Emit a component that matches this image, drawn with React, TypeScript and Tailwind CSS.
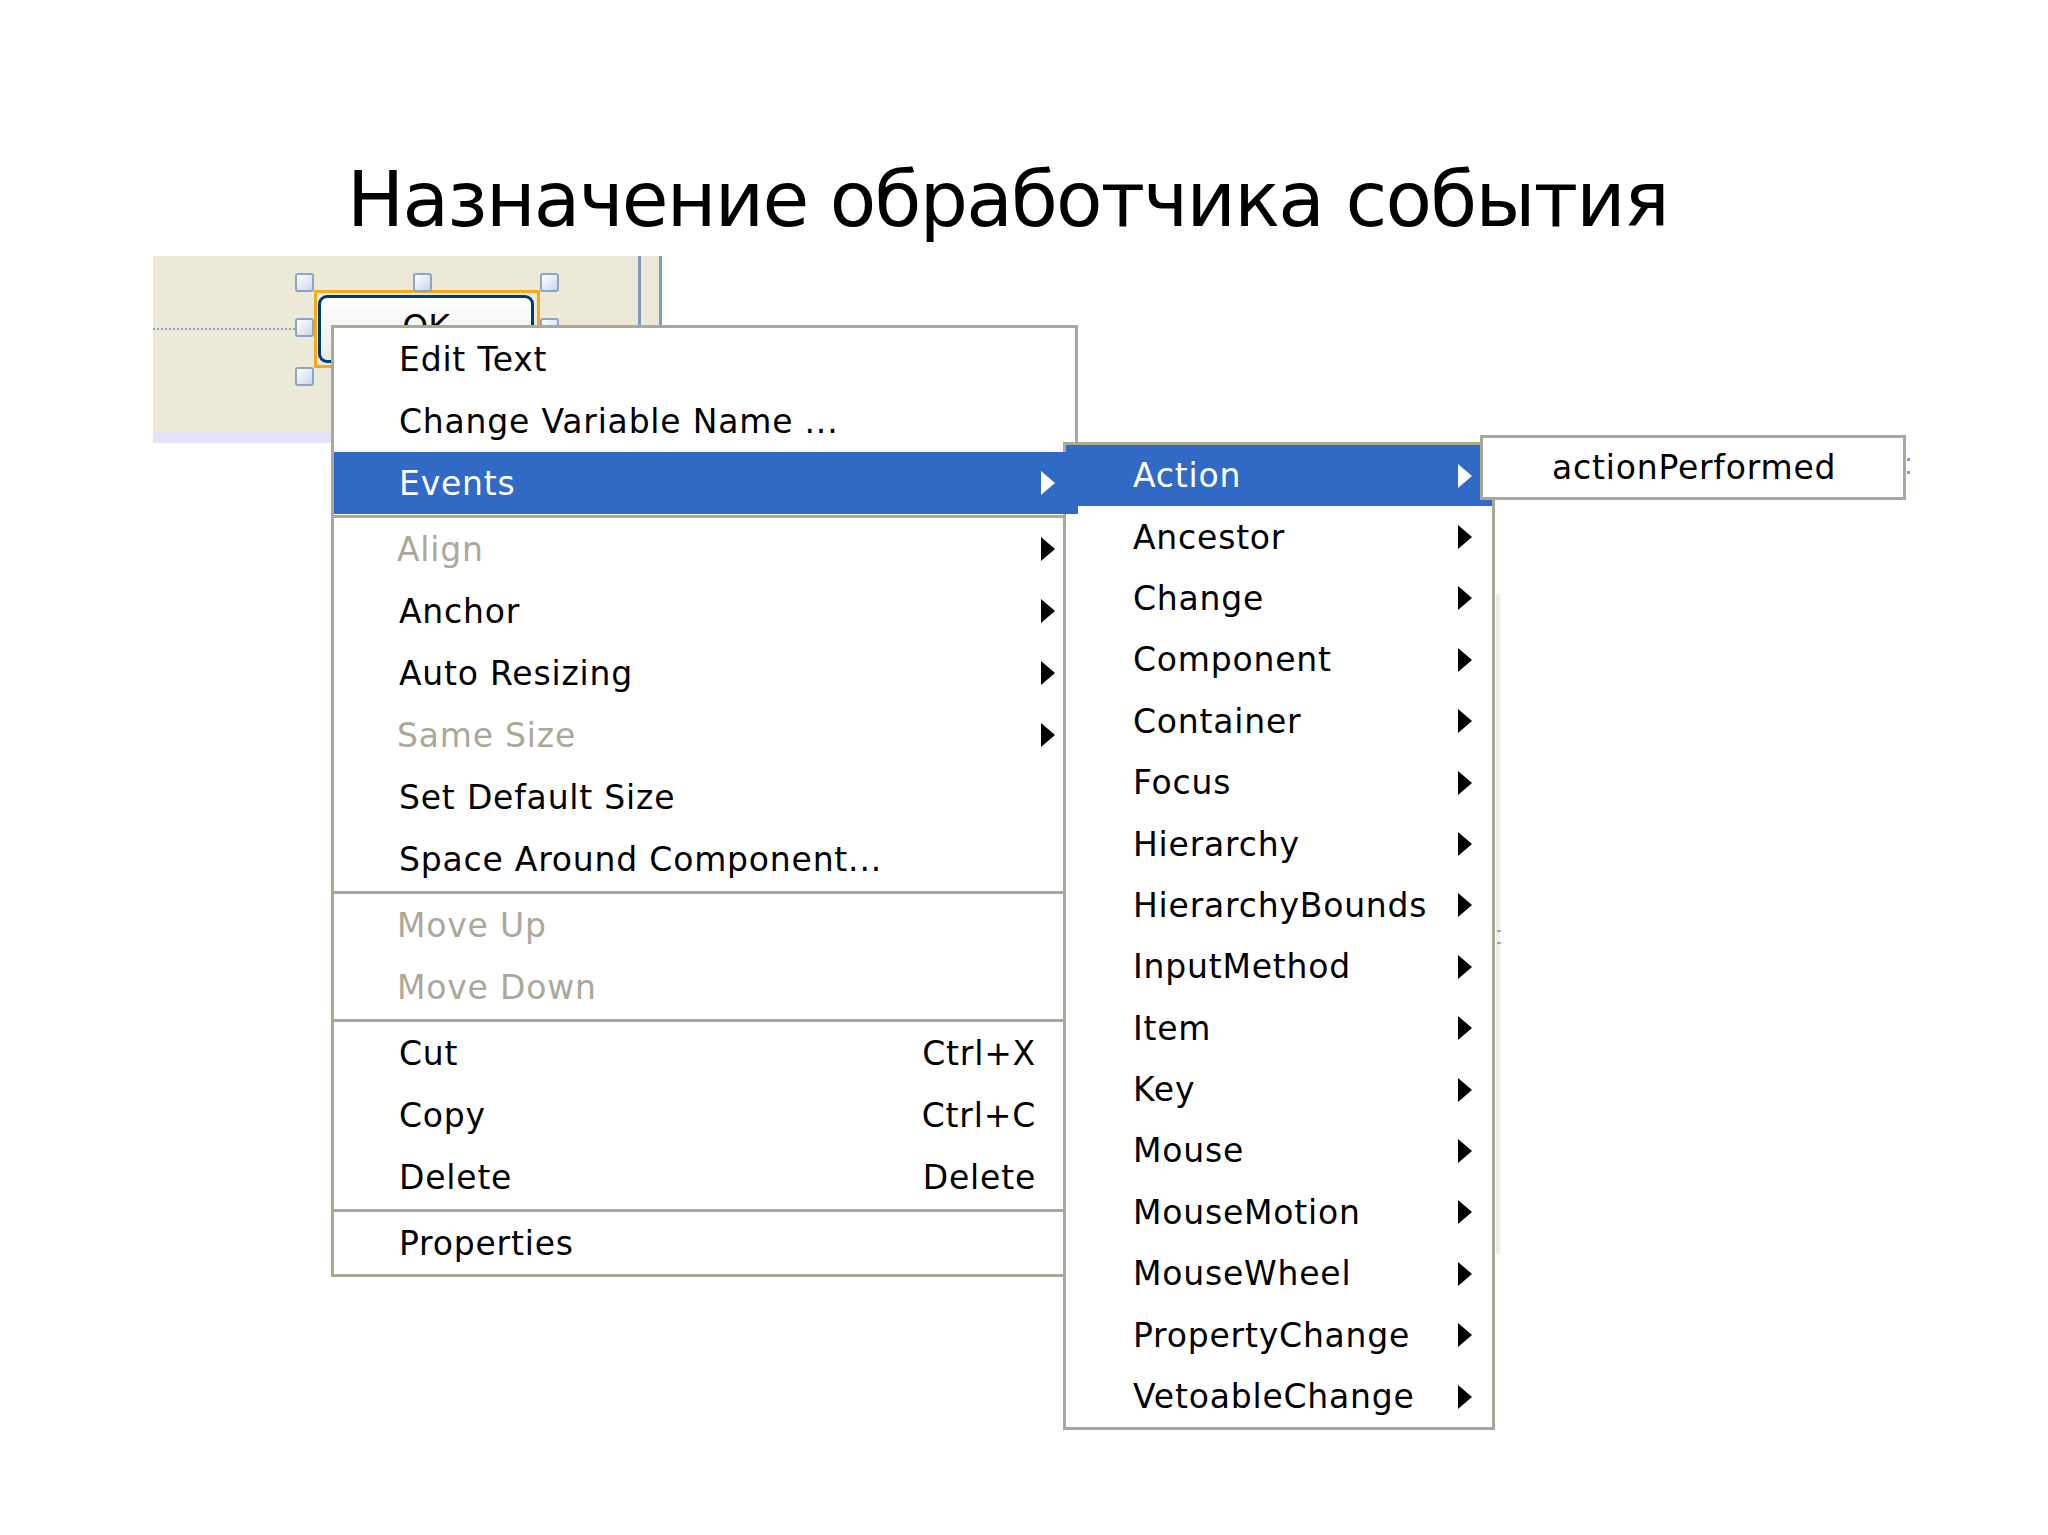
import React from 'react'

type Item = {
  label: string
  sub?: boolean
  disabled?: boolean
  active?: boolean
  shortcut?: string
}

const mainSections: Item[][] = [
  [
    { label: 'Edit Text' },
    { label: 'Change Variable Name ...' },
    { label: 'Events', sub: true, active: true },
  ],
  [
    { label: 'Align', sub: true, disabled: true },
    { label: 'Anchor', sub: true },
    { label: 'Auto Resizing', sub: true },
    { label: 'Same Size', sub: true, disabled: true },
    { label: 'Set Default Size' },
    { label: 'Space Around Component...' },
  ],
  [
    { label: 'Move Up', disabled: true },
    { label: 'Move Down', disabled: true },
  ],
  [
    { label: 'Cut', shortcut: 'Ctrl+X' },
    { label: 'Copy', shortcut: 'Ctrl+C' },
    { label: 'Delete', shortcut: 'Delete' },
  ],
  [{ label: 'Properties' }],
]

const eventItems = [
  'Action',
  'Ancestor',
  'Change',
  'Component',
  'Container',
  'Focus',
  'Hierarchy',
  'HierarchyBounds',
  'InputMethod',
  'Item',
  'Key',
  'Mouse',
  'MouseMotion',
  'MouseWheel',
  'PropertyChange',
  'VetoableChange',
]

function Arrow({ white }: { white?: boolean }) {
  return (
    <svg width="14" height="24" viewBox="0 0 14 24" className="shrink-0">
      <polygon points="0,0 14,12 0,24" fill={white ? '#ffffff' : '#000000'} />
    </svg>
  )
}

function Handle({ className }: { className: string }) {
  return (
    <div
      className={`absolute w-[19px] h-[19px] rounded-[3px] border-2 border-[#8ea4c4] bg-gradient-to-br from-white to-[#c9d7ea] ${className}`}
    />
  )
}

function MainRow({ item }: { item: Item }) {
  const color = item.active ? 'text-white bg-[#316ac5]' : item.disabled ? 'text-[#aca899]' : 'text-black'
  return (
    <div className={`h-[62px] flex items-center pr-[20px] ${color}`}>
      <span className={`flex-1 ${item.disabled ? 'pl-[63px]' : 'pl-[65px]'}`}>{item.label}</span>
      {item.shortcut && <span className="pr-[19px]">{item.shortcut}</span>}
      {item.sub && <Arrow white={item.active} />}
    </div>
  )
}

export default function App() {
  return (
    <div className="relative w-[2048px] h-[1535px] bg-white overflow-hidden font-['DejaVu_Sans',sans-serif]">
      {/* Slide title */}
      <h1 className="pt-[162px] pl-[347px] text-[76px] leading-none tracking-[-1.75px] text-black whitespace-nowrap">
        Назначение обработчика события
      </h1>

      {/* Designer canvas behind the menus */}
      <div className="mt-[18px] ml-[153px] w-[509px] h-[187px] flex flex-col">
        <div className="relative flex-1 bg-[#ece9d8]">
          <div className="absolute left-0 top-[72px] w-[142px] border-t-2 border-dotted border-[#8ea4c4]" />
          <div className="absolute left-[485px] top-0 bottom-0 w-[3px] bg-[#7f9db9]" />
          <div className="absolute right-0 top-0 bottom-0 w-[3px] bg-[#7f9db9]" />

          {/* selected button */}
          <div className="absolute left-[161px] top-[34px] w-[226px] h-[78px] border-[3px] border-[#f7a81b]" />
          <div className="absolute left-[165px] top-[39px] w-[216px] h-[68px] rounded-[9px] border-[3px] border-[#003c74] bg-gradient-to-b from-white to-[#ecebe6] flex justify-center overflow-hidden">
            <span className="pt-[13px] text-[33px] leading-none text-black">OK</span>
          </div>

          <Handle className="left-[142px] top-[17px]" />
          <Handle className="left-[260px] top-[17px]" />
          <Handle className="left-[387px] top-[17px]" />
          <Handle className="left-[142px] top-[62px]" />
          <Handle className="left-[387px] top-[62px]" />
          <Handle className="left-[142px] top-[111px]" />
        </div>
        <div className="h-[11px] bg-[#e3e2f8]" />
      </div>

      {/* faint leftovers of the canvas to the right of the submenu */}
      <div className="absolute left-[1496px] top-[594px] w-[4px] h-[660px] bg-[#ececec]" />
      <div className="absolute left-[1497px] top-[930px] w-[4px] h-[14px] border-y-2 border-[#9aa]" />
      <div className="absolute left-[1907px] top-[458px] w-[3px] h-[16px] border-y-[3px] border-[#7f9db9]" />

      {/* Main context menu */}
      <div className="absolute left-[331px] top-[325px] w-[747px] border-[3px] border-[#aca899] bg-white text-[33px] tracking-[0.8px] leading-none">
        {mainSections.map((section, si) => (
          <div key={si}>
            {si > 0 && <div className="h-[3px] my-[0.5px] bg-[#aca899]" />}
            {section.map((item) => (
              <MainRow key={item.label} item={item} />
            ))}
          </div>
        ))}
      </div>

      {/* Events submenu */}
      <div className="absolute left-[1063px] top-[442px] w-[432px] border-[3px] border-[#aca899] bg-white text-[33px] tracking-[0.8px] leading-none">
        {eventItems.map((label, i) => (
          <div
            key={label}
            className={`h-[61.4px] flex items-center pl-[67px] pr-[20px] ${i === 0 ? 'bg-[#316ac5] text-white' : 'text-black'}`}
          >
            <span className="flex-1">{label}</span>
            <Arrow white={i === 0} />
          </div>
        ))}
      </div>

      {/* Events highlight running into the submenu */}
      <div className="absolute left-[1063px] top-[452px] w-[15px] h-[62px] bg-[#316ac5]" />

      {/* Action submenu */}
      <div className="absolute left-[1480px] top-[435px] w-[426px] h-[65px] border-[3px] border-[#aca899] bg-white flex items-center pl-[69px] text-[33px] tracking-[0.8px] leading-none text-black">
        actionPerformed
      </div>
    </div>
  )
}
